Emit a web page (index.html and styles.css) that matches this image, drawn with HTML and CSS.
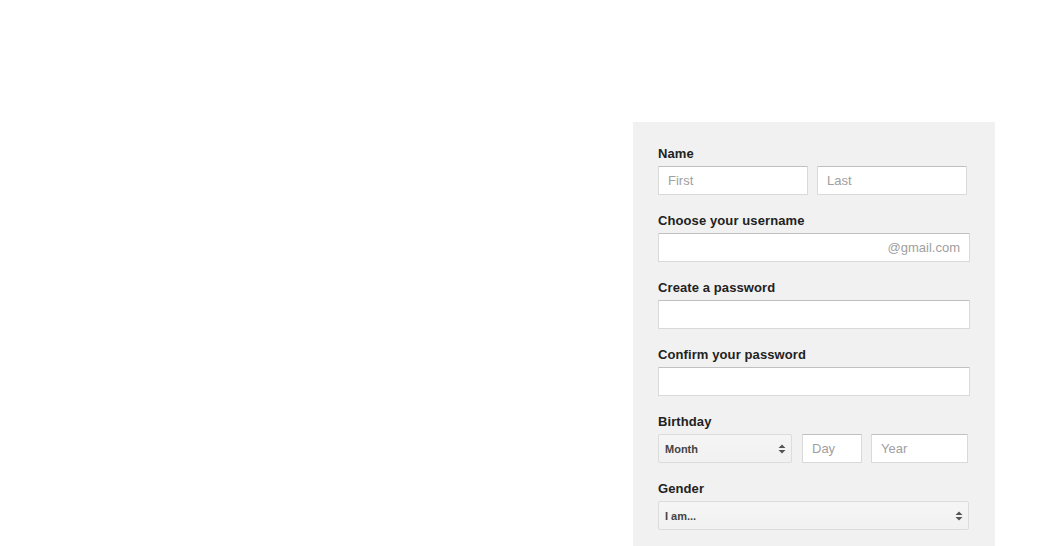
FILE: index.html
```html
<!DOCTYPE html>
<html lang="en">
<head>
<meta charset="utf-8">
<title>Create your Google Account</title>
<link rel="stylesheet" href="styles.css">
</head>
<body>
<div class="page">
  <form class="signup">
    <div class="group">
      <label class="label">Name</label>
      <div class="row">
        <input class="field w150" type="text" placeholder="First">
        <input class="field w150" type="text" placeholder="Last">
      </div>
    </div>
    <div class="group">
      <label class="label">Choose your username</label>
      <div class="field username"><span class="suffix">@gmail.com</span></div>
    </div>
    <div class="group">
      <label class="label">Create a password</label>
      <input class="field full" type="password">
    </div>
    <div class="group">
      <label class="label">Confirm your password</label>
      <input class="field full" type="password">
    </div>
    <div class="group">
      <label class="label">Birthday</label>
      <div class="row bday">
        <div class="select month"><span>Month</span>
          <svg class="arrows" width="8" height="10" viewBox="0 0 8 10"><path d="M4 0.5 L7.5 4 L0.5 4 Z M0.5 6 L7.5 6 L4 9.5 Z" fill="#555"/></svg>
        </div>
        <input class="field day" type="text" placeholder="Day">
        <input class="field year" type="text" placeholder="Year">
      </div>
    </div>
    <div class="group last">
      <label class="label">Gender</label>
      <div class="select gender"><span>I am...</span>
        <svg class="arrows" width="8" height="10" viewBox="0 0 8 10"><path d="M4 0.5 L7.5 4 L0.5 4 Z M0.5 6 L7.5 6 L4 9.5 Z" fill="#555"/></svg>
      </div>
    </div>
  </form>
</div>
</body>
</html>
```

FILE: styles.css
```css
html, body {
  margin: 0;
  padding: 0;
  background: #fff;
  overflow: hidden;
}
body {
  font-family: Arial, "Liberation Sans", sans-serif;
  color: #222;
}
.page {
  display: flex;
  justify-content: flex-end;
  padding: 122px 45px 0 0;
}
.signup {
  box-sizing: border-box;
  width: 362px;
  background: #f1f1f1;
  padding: 24px 25px 17px 25px;
}
.group {
  margin-bottom: 18px;
}
.group.last {
  margin-bottom: 0;
}
.label {
  display: block;
  font-size: 13px;
  font-weight: bold;
  line-height: 16px;
  margin-bottom: 4px;
  color: #222;
  letter-spacing: 0.1px;
}
.row {
  display: flex;
  gap: 9px;
}
.row.bday {
  gap: 10px;
}
.field {
  box-sizing: border-box;
  height: 29px;
  margin: 0;
  background: #fff;
  border: 1px solid #d9d9d9;
  border-top-color: #c0c0c0;
  border-radius: 1px;
  padding: 0 9px;
  font-family: Arial, "Liberation Sans", sans-serif;
  font-size: 13px;
  color: #333;
  outline: none;
}
.field::placeholder {
  color: #a0a0a0;
}
.w150 {
  width: 150px;
}
.full {
  display: block;
  width: 312px;
}
.username {
  width: 312px;
  display: flex;
  align-items: center;
  justify-content: flex-end;
  padding-right: 9px;
}
.suffix {
  color: #a0a0a0;
  font-size: 13px;
}
.day {
  width: 60px;
}
.year {
  width: 97px;
  margin-left: -1px;
}
.select {
  box-sizing: border-box;
  height: 29px;
  display: flex;
  align-items: center;
  justify-content: space-between;
  background: linear-gradient(#f5f5f5, #f1f1f1);
  border: 1px solid #dcdcdc;
  border-radius: 2px;
  padding: 0 5px 0 6px;
  font-size: 11px;
  font-weight: bold;
  color: #444;
}
.month {
  width: 134px;
}
.gender {
  width: 311px;
}
.arrows {
  display: block;
}
```
